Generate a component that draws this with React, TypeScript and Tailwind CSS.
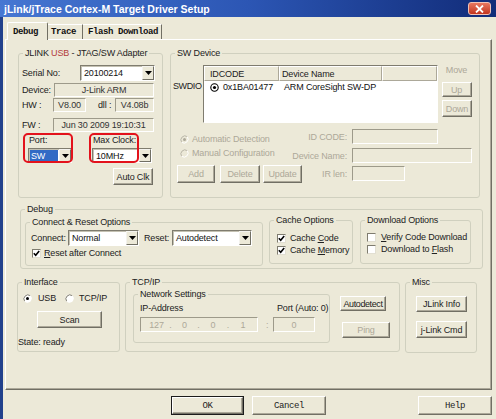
import React from "react"

type Kids = { children?: React.ReactNode; className?: string }

function Btn({ children, className = "", disabled = false }: Kids & { disabled?: boolean }) {
  return (
    <div
      className={`flex items-center justify-center shrink-0 bg-[#ece9d8] border border-t-white border-l-white border-r-[#716f64] border-b-[#716f64] shadow-[inset_-1px_-1px_0_#aca899] ${
        disabled ? "text-[#aca899]" : "text-[#1c1c1c]"
      } ${className}`}
    >
      {children}
    </div>
  )
}

function Field({ children, className = "" }: Kids) {
  return (
    <div
      className={`flex items-center shrink-0 border border-t-[#9d9a8a] border-l-[#9d9a8a] border-b-white border-r-white ${className}`}
    >
      {children}
    </div>
  )
}

function Arrow() {
  return (
    <div className="w-[12px] shrink-0 flex items-center justify-center bg-[#ece9d8] border border-t-[#f4f3ee] border-l-[#f4f3ee] border-r-[#716f64] border-b-[#716f64]">
      <svg width="7" height="4" viewBox="0 0 7 4">
        <polygon points="0,0 7,0 3.5,4" fill="#000" />
      </svg>
    </div>
  )
}

function Select({ value, className = "", highlight = false }: { value: string; className?: string; highlight?: boolean }) {
  return (
    <div
      className={`flex shrink-0 bg-white border border-t-[#7f7c6f] border-l-[#7f7c6f] border-b-white border-r-white shadow-[inset_1px_1px_0_#c4c1b2] ${className}`}
    >
      <div className="flex-1 flex items-center p-[1px]">
        {highlight ? (
          <span className="flex items-center h-full w-full bg-[#316ac5] text-white pl-[1px]">{value}</span>
        ) : (
          <span className="pl-[2px] text-[#111]">{value}</span>
        )}
      </div>
      <Arrow />
    </div>
  )
}

function Check({ checked = false }: { checked?: boolean }) {
  return (
    <span className="w-[9px] h-[9px] shrink-0 flex items-center justify-center bg-white border border-t-[#7f7c6f] border-l-[#7f7c6f] border-b-[#e2dfd2] border-r-[#e2dfd2]">
      {checked && (
        <svg width="7" height="7" viewBox="0 0 7 7">
          <path d="M0.8 3.2 L2.7 5.2 L6.2 1" stroke="#000" strokeWidth="1.6" fill="none" />
        </svg>
      )}
    </span>
  )
}

function Radio({ on = false, disabled = false }: { on?: boolean; disabled?: boolean }) {
  return (
    <svg width="9" height="9" viewBox="0 0 9 9" className="shrink-0">
      <circle cx="4.5" cy="4.5" r="4" fill={disabled ? "#ece9d8" : "#fff"} />
      <path d="M1.7 7.3 A4 4 0 0 1 7.3 1.7" stroke={disabled ? "#b9b6a8" : "#7f7c6f"} fill="none" />
      <path d="M7.3 1.7 A4 4 0 0 1 1.7 7.3" stroke="#fff" fill="none" />
      {on && <circle cx="4.5" cy="4.5" r="1.5" fill={disabled ? "#aca899" : "#000"} />}
    </svg>
  )
}

function Group({ title, className = "", children }: Kids & { title: React.ReactNode }) {
  return (
    <fieldset className={`shrink-0 border border-[#d0d0bf] rounded-[3px] ${className}`}>
      <legend className="ml-[4px] px-[2px] leading-[10px] text-[9px] text-[#222]">{title}</legend>
      {children}
    </fieldset>
  )
}

export default function App() {
  return (
    <div className="w-[496px] h-[419px] overflow-hidden bg-[#ece9d8] flex flex-col whitespace-nowrap font-['Liberation_Sans',Arial,sans-serif] text-[9px] leading-[10px] tracking-[-0.15px] text-[#222]">
      {/* title bar */}
      <div className="h-[17px] shrink-0 flex items-center justify-between bg-linear-to-r from-[#4677d2] via-[#2c56b4] to-[#122c79] pl-[4px] pr-[5px]">
        <span className="text-white font-bold text-[10.5px] leading-[12px] tracking-normal">jLink/jTrace Cortex-M Target Driver Setup</span>
        <div className="w-[23px] h-[13px] rounded-[3px] bg-linear-to-b from-[#e9775f] to-[#c2321d] border border-[#f0c2b6] flex items-center justify-center">
          <svg width="9" height="8" viewBox="0 0 9 8">
            <path d="M1 0.5 L8 7.5 M8 0.5 L1 7.5" stroke="#fff" strokeWidth="1.8" />
          </svg>
        </div>
      </div>

      <div className="flex flex-1">
        <div className="w-[3px] bg-[#22418c]" />
        <div className="flex flex-col">
          {/* tabs */}
          <div className="flex items-end h-[18px] mt-[5px] ml-[4px] -mb-px relative z-10 font-['Liberation_Mono',monospace] font-bold text-[9px] tracking-[-0.4px] text-[#111]">
            <div className="w-[41px] h-[18px] pl-[5px] flex items-center bg-[#ece9d8] border-t border-l border-r border-t-white border-l-white border-r-[#716f64] rounded-t-[2px]">
              Debug
            </div>
            <div className="w-[35px] h-[15px] mb-px pl-[3px] flex items-center border-t border-r border-t-white border-r-[#716f64]">
              Trace
            </div>
            <div className="w-[79px] h-[15px] mb-px pl-[5px] flex items-center border-t border-r border-t-white border-r-[#716f64]">
              Flash Download
            </div>
          </div>

          {/* tab page */}
          <div className="ml-[2px] w-[487px] h-[351px] border border-t-white border-l-white border-r-[#716f64] border-b-[#716f64] shadow-[inset_-1px_-1px_0_#aca899] flex flex-col">
            <div className="flex mt-[8px]">
              <Group
                className="ml-[12px] w-[145px] h-[150px]"
                title={
                  <>
                    JLINK <span className="text-[#b23b3b]">USB</span> - JTAG/SW Adapter
                  </>
                }
              >
                <div className="relative flex flex-col">
                  <div className="flex items-center mt-[7px] h-[16px]">
                    <span className="ml-[3px] w-[58px]">Serial No:</span>
                    <Select className="w-[75px] h-[16px]" value="20100214" />
                  </div>
                  <div className="flex items-center mt-[2px] h-[14px]">
                    <span className="ml-[3px] w-[32px]">Device:</span>
                    <Field className="w-[100px] h-[14px] justify-center text-[#333]">J-Link ARM</Field>
                  </div>
                  <div className="flex items-center mt-[1px] h-[14px]">
                    <span className="ml-[3px] w-[31px]">HW :</span>
                    <Field className="w-[33px] h-[14px] justify-center text-[#333]">V8.00</Field>
                    <span className="ml-[12px] w-[17px]">dll :</span>
                    <Field className="w-[39px] h-[14px] justify-center text-[#333]">V4.08b</Field>
                  </div>
                  <div className="flex items-center mt-[6px] h-[14px]">
                    <span className="ml-[3px] w-[31px]">FW :</span>
                    <Field className="w-[101px] h-[14px] justify-center text-[#333]">Jun 30 2009 19:10:31</Field>
                  </div>
                  <div className="flex mt-[3px] h-[10px]">
                    <span className="ml-[10px] w-[64px]">Port:</span>
                    <span>Max Clock:</span>
                  </div>
                  <div className="flex mt-[3px] h-[15px]">
                    <Select className="ml-[9px] w-[44px] h-[15px]" value="SW" highlight />
                    <Select className="ml-[20px] w-[60px] h-[15px]" value="10MHz" />
                  </div>
                  <Btn className="mt-[5px] ml-[94px] w-[40px] h-[17px]">Auto Clk</Btn>

                  <div className="absolute left-[4px] top-[75px] w-[50px] h-[30px] border-2 border-[#e3121c] rounded-[5px]" />
                  <div className="absolute left-[70px] top-[75px] w-[50px] h-[30px] border-2 border-[#e3121c] rounded-[5px]" />
                </div>
              </Group>

              <Group className="ml-[7px] w-[310px] h-[150px]" title="SW Device">
                <div className="flex flex-col">
                  <div className="flex mt-[7px]">
                    <span className="ml-[2px] w-[30px] mt-[16px] text-[#222] tracking-[-0.4px]">SWDIO</span>
                    <div className="w-[235px] h-[58px] bg-white border border-t-[#7f7c6f] border-l-[#7f7c6f] border-b-white border-r-white flex flex-col">
                      <div className="flex h-[15px] bg-[#ece9d8] shrink-0">
                        <div className="w-[75px] pl-[5px] flex items-center border border-t-white border-l-white border-r-[#aca899] border-b-[#aca899]">
                          IDCODE
                        </div>
                        <div className="w-[103px] pl-[2px] flex items-center border border-t-white border-l-white border-r-[#aca899] border-b-[#aca899]">
                          Device Name
                        </div>
                        <div className="flex-1 border border-t-white border-l-white border-r-[#aca899] border-b-[#aca899]" />
                      </div>
                      <div className="flex items-center mt-[1px] h-[10px] text-[#111]">
                        <span className="ml-[6px]">
                          <svg width="9" height="9" viewBox="0 0 9 9">
                            <circle cx="4.5" cy="4.5" r="3.7" stroke="#000" strokeWidth="1.1" fill="#fff" />
                            <circle cx="4.5" cy="4.5" r="1.6" fill="#000" />
                          </svg>
                        </span>
                        <span className="ml-[4px] w-[61px]">0x1BA01477</span>
                        <span>ARM CoreSight SW-DP</span>
                      </div>
                    </div>
                    <div className="ml-[3px] w-[31px] flex flex-col items-center">
                      <span className="text-[#aca899] h-[10px]">Move</span>
                      <Btn disabled className="mt-[7px] w-[30px] h-[15px]">
                        Up
                      </Btn>
                      <Btn disabled className="mt-[3px] ml-[1px] w-[30px] h-[17px]">
                        Down
                      </Btn>
                    </div>
                  </div>

                  <div className="flex mt-[6px] h-[15px] text-[#aca899]">
                    <div className="w-[129px] shrink-0 flex items-center gap-[3px] pl-[9px] mt-[5px] self-start h-[10px]">
                      <Radio on disabled />
                      <span>Automatic Detection</span>
                    </div>
                    <div className="w-[47px] flex justify-end items-center">ID CODE:</div>
                    <Field className="ml-[5px] w-[86px] h-[15px]" />
                  </div>
                  <div className="flex mt-[4px] h-[15px] text-[#aca899]">
                    <div className="w-[129px] shrink-0 flex items-center gap-[3px] pl-[9px] self-start h-[10px]">
                      <Radio disabled />
                      <span>Manual Configuration</span>
                    </div>
                    <div className="w-[47px] flex justify-end items-center">Device Name:</div>
                    <Field className="ml-[5px] w-[120px] h-[15px]" />
                  </div>
                  <div className="flex mt-[2px] h-[18px] text-[#aca899]">
                    <div className="w-[129px] shrink-0 flex pl-[6px]">
                      <Btn disabled className="w-[38px] h-[18px]">
                        Add
                      </Btn>
                      <Btn disabled className="ml-[5px] w-[40px] h-[18px]">
                        Delete
                      </Btn>
                      <Btn disabled className="ml-[3px] w-[39px] h-[18px]">
                        Update
                      </Btn>
                    </div>
                    <div className="w-[47px] flex justify-end items-center">IR len:</div>
                    <Field className="ml-[5px] mt-[1px] w-[53px] h-[15px]" />
                  </div>
                </div>
              </Group>
            </div>

            {/* Debug */}
            <Group className="mt-[6px] ml-[14px] w-[463px] h-[65px]" title="Debug">
              <div className="flex items-start">
                <Group className="ml-[4px] mt-[3px] w-[238px] h-[49px]" title="Connect & Reset Options">
                  <div className="flex flex-col">
                    <div className="flex items-center mt-[3px] h-[16px]">
                      <span className="ml-[5px] w-[37px]">Connect:</span>
                      <Select className="w-[71px] h-[16px]" value="Normal" />
                      <span className="ml-[5px] w-[28px]">Reset:</span>
                      <Select className="w-[80px] h-[16px]" value="Autodetect" />
                    </div>
                    <div className="flex items-center gap-[3px] mt-[2px] h-[10px] ml-[6px]">
                      <Check checked />
                      <span>
                        <span className="underline">R</span>eset after Connect
                      </span>
                    </div>
                  </div>
                </Group>
                <Group className="ml-[6px] mt-[1px] w-[84px] h-[49px]" title="Cache Options">
                  <div className="flex flex-col ml-[7px]">
                    <div className="flex items-center gap-[4px] mt-[8px] h-[10px]">
                      <Check checked />
                      <span>
                        Cache <span className="underline">C</span>ode
                      </span>
                    </div>
                    <div className="flex items-center gap-[4px] mt-[2px] h-[10px]">
                      <Check checked />
                      <span>
                        Cache <span className="underline">M</span>emory
                      </span>
                    </div>
                  </div>
                </Group>
                <Group className="ml-[7px] mt-[1px] w-[111px] h-[49px]" title="Download Options">
                  <div className="flex flex-col ml-[6px]">
                    <div className="flex items-center gap-[5px] mt-[7px] h-[10px]">
                      <Check />
                      <span>
                        <span className="underline">V</span>erify Code Download
                      </span>
                    </div>
                    <div className="flex items-center gap-[5px] mt-[2px] h-[10px]">
                      <Check />
                      <span>
                        Download to <span className="underline">F</span>lash
                      </span>
                    </div>
                  </div>
                </Group>
              </div>
            </Group>

            {/* bottom row */}
            <div className="flex mt-[8px]">
              <Group className="ml-[11px] w-[103px] h-[75px]" title="Interface">
                <div className="flex flex-col">
                  <div className="flex items-center mt-[6px] h-[10px]">
                    <span className="ml-[5px]">
                      <Radio on />
                    </span>
                    <span className="ml-[6px] w-[27px]">USB</span>
                    <Radio />
                    <span className="ml-[5px]">TCP/IP</span>
                  </div>
                  <Btn className="mt-[8px] ml-[19px] w-[65px] h-[17px]">Scan</Btn>
                  <span className="mt-[9px]">State: ready</span>
                </div>
              </Group>

              <Group className="ml-[5px] w-[275px] h-[75px]" title="TCP/IP">
                <div className="flex items-start">
                  <Group className="ml-[7px] mt-[2px] w-[197px] h-[54px]" title="Network Settings">
                    <div className="flex flex-col">
                      <div className="flex mt-[4px] h-[10px]">
                        <span className="ml-[6px] w-[137px]">IP-Address</span>
                        <span>Port (Auto: 0)</span>
                      </div>
                      <div className="flex items-center mt-[4px] h-[15px]">
                        <Field className="ml-[6px] w-[118px] h-[15px] pl-[5px] text-[#aca899]">
                          <span className="w-[21px] text-center">127</span>
                          <span className="w-[7px] text-center">.</span>
                          <span className="w-[21px] text-center">0</span>
                          <span className="w-[7px] text-center">.</span>
                          <span className="w-[22px] text-center">0</span>
                          <span className="w-[8px] text-center">.</span>
                          <span className="w-[22px] text-center">1</span>
                        </Field>
                        <span className="ml-[8px] w-[7px] text-[#aca899]">:</span>
                        <Field className="w-[42px] h-[15px] justify-center text-[#aca899]">0</Field>
                      </div>
                    </div>
                  </Group>
                  <div className="ml-[10px] flex flex-col">
                    <Btn className="mt-[9px] w-[46px] h-[15px] tracking-[-0.4px]">Autodetect</Btn>
                    <Btn disabled className="mt-[11px] ml-[2px] w-[48px] h-[16px]">
                      Ping
                    </Btn>
                  </div>
                </div>
              </Group>

              <Group className="ml-[5px] w-[72px] h-[76px]" title="Misc">
                <div className="flex flex-col">
                  <Btn className="ml-[10px] mt-[9px] w-[51px] h-[16px]">JLink Info</Btn>
                  <Btn className="ml-[10px] mt-[9px] w-[51px] h-[17px]">j-Link Cmd</Btn>
                </div>
              </Group>
            </div>
          </div>

          {/* dialog buttons */}
          <div className="flex mt-[6px] ml-[168px] font-['Liberation_Mono',monospace] text-[9px] tracking-[-0.4px]">
            <div className="w-[73px] h-[19px] border border-[#1c1c1c] flex">
              <Btn className="flex-1 h-full">OK</Btn>
            </div>
            <Btn className="ml-[8px] w-[74px] h-[19px]">Cancel</Btn>
            <Btn className="ml-[92px] w-[74px] h-[19px]">Help</Btn>
          </div>
        </div>
      </div>
    </div>
  )
}
